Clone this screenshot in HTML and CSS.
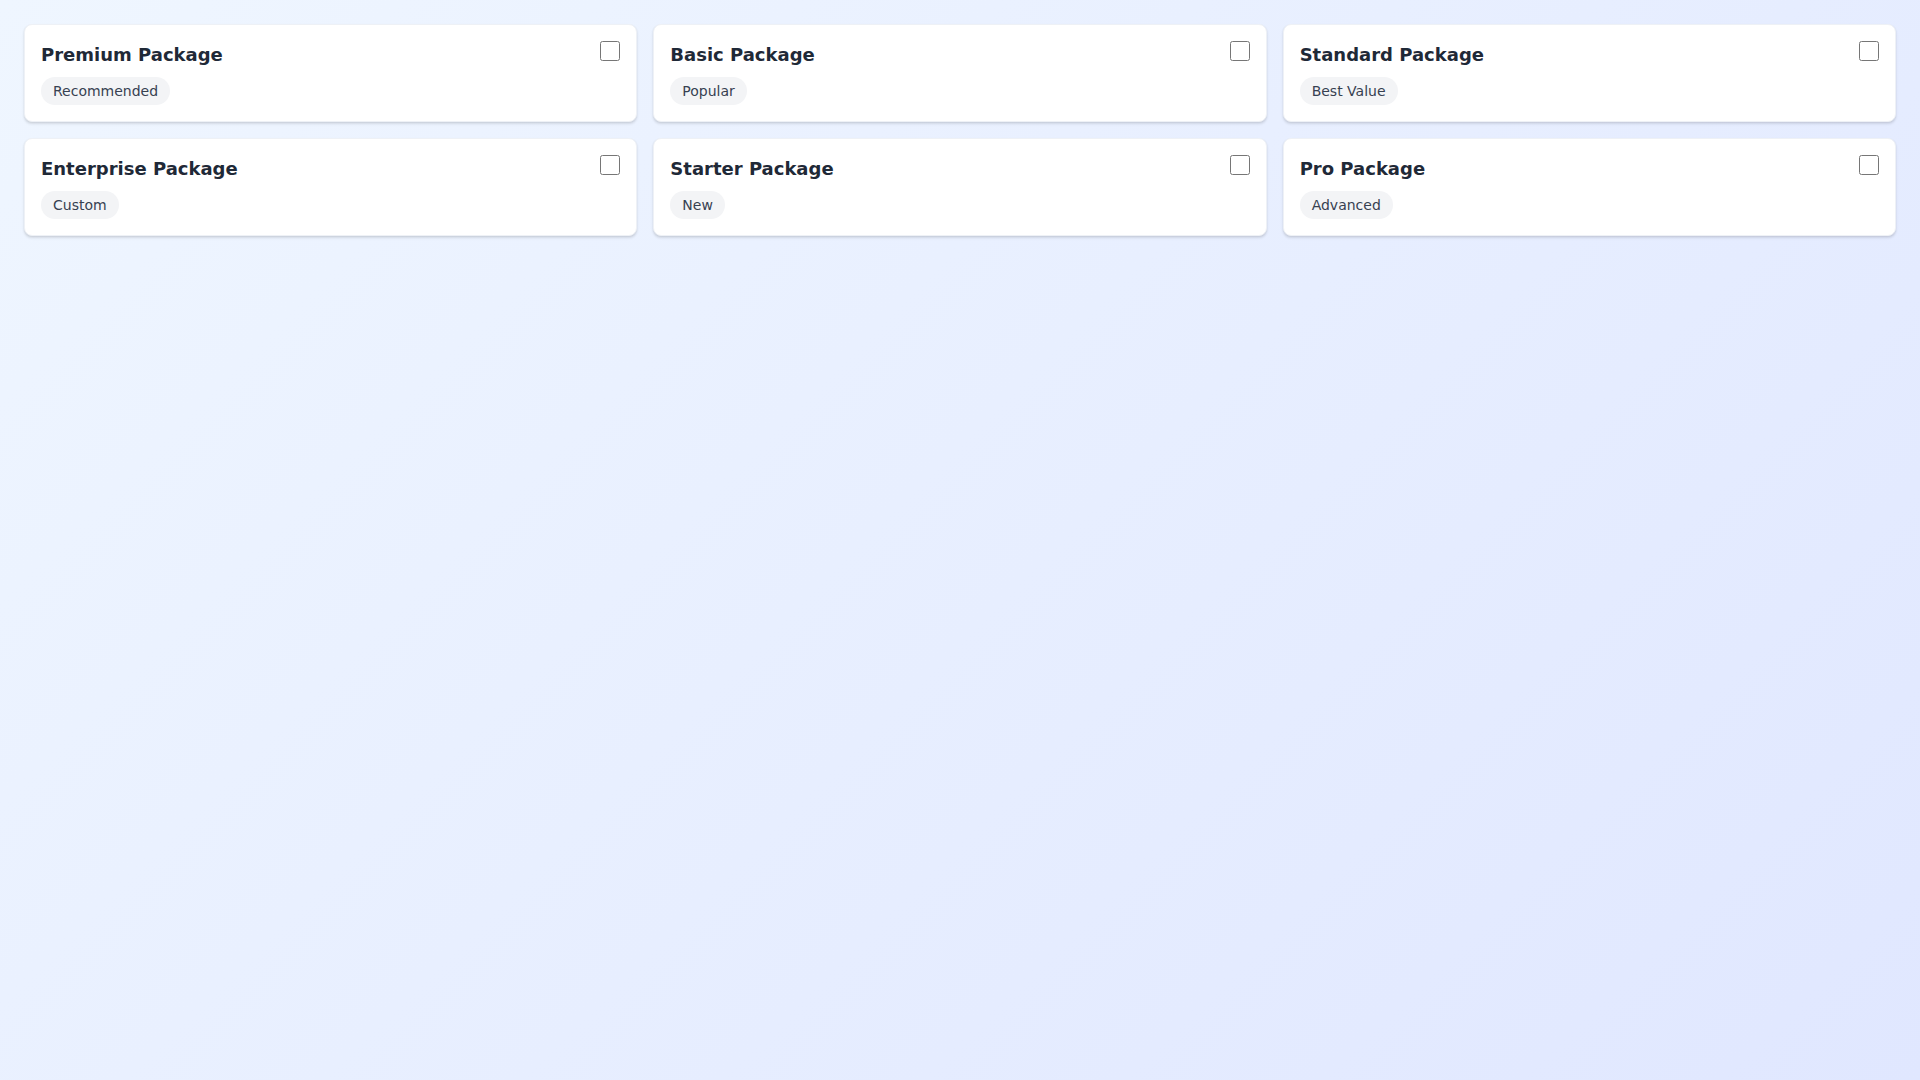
FILE: index.html
```html
<!DOCTYPE html>
<html lang="en">
<head>
    <meta charset="UTF-8">
    <meta name="viewport" content="width=device-width, initial-scale=1.0">
    <title>Packages</title>
    <link rel="stylesheet" href="styles.css">
</head>
<body>
    <div class="grid">
        <div class="card">
            <div class="card-body">
                <h3>Premium Package</h3>
                <span class="badge">Recommended</span>
            </div>
            <input type="checkbox">
        </div>
        <div class="card">
            <div class="card-body">
                <h3>Basic Package</h3>
                <span class="badge">Popular</span>
            </div>
            <input type="checkbox">
        </div>
        <div class="card">
            <div class="card-body">
                <h3>Standard Package</h3>
                <span class="badge">Best Value</span>
            </div>
            <input type="checkbox">
        </div>
        <div class="card">
            <div class="card-body">
                <h3>Enterprise Package</h3>
                <span class="badge">Custom</span>
            </div>
            <input type="checkbox">
        </div>
        <div class="card">
            <div class="card-body">
                <h3>Starter Package</h3>
                <span class="badge">New</span>
            </div>
            <input type="checkbox">
        </div>
        <div class="card">
            <div class="card-body">
                <h3>Pro Package</h3>
                <span class="badge">Advanced</span>
            </div>
            <input type="checkbox">
        </div>
    </div>
</body>
</html>
```
FILE: styles.css
```css
html, body {
    height: 100%;
}
body {
    margin: 0;
    font-family: "DejaVu Sans", sans-serif;
    background: linear-gradient(135deg, #eff6ff, #e0e7ff);
    color: #1f2937;
}
.grid {
    display: grid;
    grid-template-columns: repeat(3, 1fr);
    gap: 16px;
    padding: 24px;
}
.card {
    display: flex;
    justify-content: space-between;
    align-items: flex-start;
    background: #fff;
    border: 1px solid #eef1f6;
    border-radius: 8px;
    padding: 16px;
    box-shadow: 0 2px 3px rgba(0, 0, 0, 0.1), 0 1px 2px rgba(0, 0, 0, 0.06);
}
.card h3 {
    margin: 0 0 8px;
    font-size: 18px;
    line-height: 28px;
    font-weight: bold;
    color: #1f2937;
}
.badge {
    display: inline-block;
    padding: 4px 12px;
    font-size: 14px;
    line-height: 20px;
    border-radius: 9999px;
    background: #f3f4f6;
    color: #374151;
}
.card input {
    width: 20px;
    height: 20px;
    margin: 0;
}
```
